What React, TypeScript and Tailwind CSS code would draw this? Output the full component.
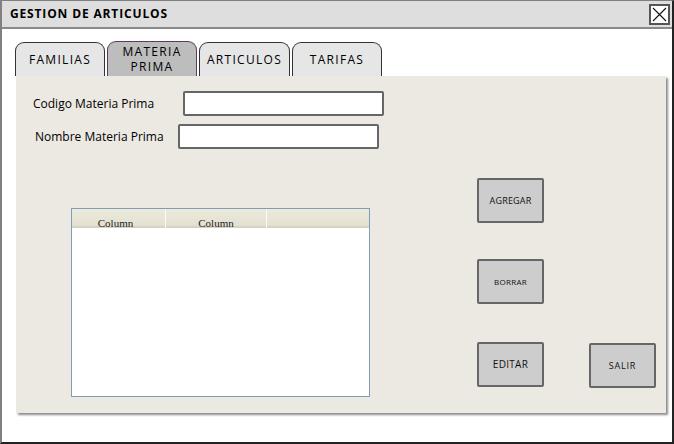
const sketch = { fontFamily: '"Open Sans", "DejaVu Sans", sans-serif' };

const tabs = [
  { label: 'FAMILIAS', w: 'w-[90px]' },
  { label: 'MATERIA PRIMA', w: 'w-[90px]', active: true },
  { label: 'ARTICULOS', w: 'w-[91px]' },
  { label: 'TARIFAS', w: 'w-[90px]' },
];

const SketchButton = ({ label, size }: { label: string; size: string }) => (
  <button
    className={`w-[67px] h-[45px] bg-[#cdcdcd] border-2 border-[#666666] rounded-[2px] text-[#111] flex items-center justify-center ${size}`}
    style={sketch}
  >
    {label}
  </button>
);

export default function App() {
  return (
    <div className="w-[674px] h-[444px] bg-white flex flex-col border-t border-l-2 border-[#808080] border-r-2 border-r-[#222] border-b-2 border-b-[#222]" style={sketch}>
      <div className="h-[28px] shrink-0 bg-[#dedede] border-b-2 border-[#8a8a8a] flex items-center justify-between pl-[8px] pr-[2px]">
        <span className="text-[12px] font-bold tracking-[0.85px] text-black">GESTION DE ARTICULOS</span>
        <div className="w-[21px] h-[21px] border-2 border-[#555] bg-white flex items-center justify-center">
          <svg width="15" height="15" viewBox="0 0 15 15">
            <path d="M1 1 L14 14 M14 1 L1 14" stroke="#111" strokeWidth="1.1" />
          </svg>
        </div>
      </div>

      <div className="pl-[13px] pt-[12px]">
        <div className="flex items-end h-[35px] gap-[2px]">
          {tabs.map((t) => (
            <div
              key={t.label}
              className={`${t.w} flex items-center justify-center text-center rounded-t-[9px] border border-b-0 tracking-[1.3px] ${
                t.active
                  ? 'h-[35px] bg-[#bdbdbd] border-[#5c3a5c] text-[12px] leading-[15px] px-[12px]'
                  : 'h-[34px] bg-[#e6e6e6] border-[#333] text-[12px]'
              }`}
            >
              {t.label}
            </div>
          ))}
        </div>

        <div className="ml-[1px] w-[650px] h-[337px] bg-[#ece9e3] shadow-[2px_2px_2px_rgba(0,0,0,0.45)] pt-[15px]">
          <div className="flex items-center h-[25px]">
            <span className="w-[167px] pl-[17px] text-[12px] text-black">Codigo Materia Prima</span>
            <div className="w-[201px] h-[25px] bg-white border-2 border-[#666] rounded-[2px]" />
          </div>
          <div className="flex items-center h-[25px] mt-[8px]">
            <span className="w-[162px] pl-[19px] text-[12px] text-black">Nombre Materia Prima</span>
            <div className="w-[201px] h-[25px] bg-white border-2 border-[#666] rounded-[2px]" />
          </div>

          <div className="flex items-start mt-[29px]">
            <div className="ml-[55px] mt-[30px] w-[299px] h-[189px] bg-white border border-[#7f9db9] flex flex-col">
              <div className="h-[19px] flex bg-gradient-to-b from-[#ebeadb] to-[#e3e0d0] border-b-2 border-[#d6d2c2]" style={{ fontFamily: '"Liberation Serif", serif' }}>
                <div className="w-[94px] pr-[6px] border-r border-[#fafafa] flex items-end justify-center text-[11px] leading-[12px] text-[#222] mb-[-3px]">Column</div>
                <div className="w-[101px] border-r border-[#fafafa] flex items-end justify-center text-[11px] leading-[12px] text-[#222] mb-[-3px]">Column</div>
                <div className="flex-1" />
              </div>
            </div>

            <div className="ml-[107px] flex flex-col">
              <SketchButton label="AGREGAR" size="text-[9px] tracking-[0.2px]" />
              <div className="mt-[36px]">
                <SketchButton label="BORRAR" size="text-[8px] tracking-[0.3px]" />
              </div>
              <div className="mt-[38px] flex items-start">
                <SketchButton label="EDITAR" size="text-[10px] tracking-[0.3px]" />
                <div className="ml-[45px] mt-[1px]">
                  <SketchButton label="SALIR" size="text-[9px] tracking-[0.8px]" />
                </div>
              </div>
            </div>
          </div>
        </div>
      </div>
    </div>
  );
}
